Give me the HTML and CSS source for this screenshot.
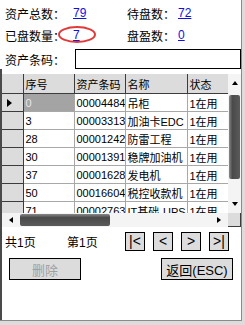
FILE: index.html
```html
<!DOCTYPE html>
<html lang="zh-CN">
<head>
  <meta charset="UTF-8" />
  <title>盘点</title>
  <link rel="stylesheet" href="styles.css">
</head>
<body>
  <div class="screen">

    <div class="top">
      <!-- 统计 -->
      <div class="stats">
        <span>资产总数：</span><a href="#" class="num">79</a>
        <span>待盘数：</span><a href="#" class="num">72</a>
        <span>已盘数量：</span><a href="#" class="num circled">7<i class="ring"></i></a>
        <span>盘盈数：</span><a href="#" class="num">0</a>
      </div>

      <!-- 条码 -->
      <div class="barcode">
        <span>资产条码：</span>
        <input type="text" class="barcode-input">
      </div>
    </div>

    <div class="bottom">
      <!-- 列表 -->
      <div class="grid">
        <div class="cells">
          <table>
            <colgroup>
              <col class="c-head"><col class="c-no"><col class="c-code"><col class="c-name"><col class="c-state">
            </colgroup>
            <thead>
              <tr><th></th><th>序号</th><th>资产条码</th><th>名称</th><th>状态</th></tr>
            </thead>
            <tbody>
              <tr><td class="rh"><span class="cursor"></span></td><td class="sel">0</td><td>00004484</td><td>吊柜</td><td>1在用</td></tr>
              <tr><td class="rh"></td><td>3</td><td>00003313</td><td>加油卡EDC</td><td>1在用</td></tr>
              <tr><td class="rh"></td><td>28</td><td>00001242</td><td>防雷工程</td><td>1在用</td></tr>
              <tr><td class="rh"></td><td>30</td><td>00001391</td><td>稳牌加油机</td><td>1在用</td></tr>
              <tr><td class="rh"></td><td>37</td><td>00001628</td><td>发电机</td><td>1在用</td></tr>
              <tr><td class="rh"></td><td>50</td><td>00016604</td><td>税控收款机</td><td>1在用</td></tr>
              <tr><td class="rh"></td><td>71</td><td>00002763</td><td>IT基础-UPS</td><td>1在用</td></tr>
            </tbody>
          </table>
        </div>
        <div class="vscroll">
          <div class="arrow-box"><span class="tri up"></span></div>
          <div class="vthumb"></div>
          <div class="vtrack"></div>
          <div class="arrow-box"><span class="tri down"></span></div>
        </div>
        <div class="hscroll">
          <div class="arrow-side"><span class="tri left"></span></div>
          <div class="hthumb"></div>
          <div class="htrack"></div>
          <div class="arrow-side"><span class="tri right"></span></div>
        </div>
        <div class="corner"></div>
      </div>

      <!-- 分页 -->
      <div class="pager">
        <span class="total">共1页</span>
        <span class="current">第1页</span>
        <div class="pager-btns">
          <button class="pg">|&lt;</button>
          <button class="pg">&lt;</button>
          <button class="pg">&gt;</button>
          <button class="pg">&gt;|</button>
        </div>
      </div>

      <div class="actions">
        <button class="btn" disabled>删除</button>
        <button class="btn">返回(ESC)</button>
      </div>
    </div>

  </div>
</body>
</html>
```

FILE: styles.css
```css
body {
  margin: 0;
  width: 245px;
  height: 325px;
  background-color: #dcdcdc;
  font-family: 'Liberation Sans', 'Noto Sans CJK SC', sans-serif;
  font-size: 12px;
  color: #000;
  overflow: hidden;
}

.screen {
  display: flex;
  flex-direction: column;
  width: 241px;
  height: 320px;
  background-color: #fff;
  border-right: 1px solid #8a8a8a;
  border-bottom: 1px solid #8a8a8a;
}

.top {
  padding-left: 2px;
}

.bottom {
  flex: 1;
  border-left: 2px solid #4a4a4a;
}

/* 统计 */
.stats {
  display: grid;
  grid-template-columns: 68px 54px 51px auto;
  grid-auto-rows: 22px;
  align-items: center;
  padding: 2px 0 0 3px;
}

.num {
  color: #1010e0;
  text-decoration: underline;
}

.circled {
  position: relative;
}

.ring {
  position: absolute;
  left: -15px;
  top: -2px;
  width: 34px;
  height: 13px;
  border: 2px solid #e03a3a;
  border-radius: 50%;
}

/* 条码 */
.barcode {
  display: flex;
  align-items: center;
  height: 20px;
  margin-top: 3px;
  padding-left: 3px;
}

.barcode span {
  width: 70px;
}

.barcode-input {
  margin: 0;
  padding: 0;
  border: 1px solid #000;
  box-sizing: border-box;
  height: 20px;
  width: 166px;
}

/* 列表 */
.grid {
  display: grid;
  grid-template-columns: 226px 13px;
  grid-template-rows: 139px 14px;
  margin-top: 5px;
}

.cells {
  overflow: hidden;
}

table {
  border-collapse: collapse;
  table-layout: fixed;
  width: 226px;
  font-size: 11px;
}

.c-head { width: 21px; }
.c-no { width: 51px; }
.c-code { width: 51px; }
.c-name { width: 62px; }
.c-state { width: 41px; }

th, td {
  padding: 0 0 0 2px;
  text-align: left;
  font-weight: normal;
  white-space: nowrap;
  overflow: hidden;
  text-overflow: clip;
}

th {
  height: 19px;
  background-color: #dcdcdc;
  border: 1px solid #3c3c3c;
  border-top: none;
}

td {
  height: 17px;
  border: 1px solid #a8a8a8;
}

td.rh {
  background-color: #dcdcdc;
  border-color: #3c3c3c;
  border-left: none;
}

th:first-child {
  border-left: none;
}

td.sel {
  background-color: #a4a4a4;
  color: #e8e8e8;
}

.cursor {
  display: block;
  width: 0;
  height: 0;
  margin-left: 3px;
  border-top: 4px solid transparent;
  border-bottom: 4px solid transparent;
  border-left: 5px solid #000;
}

/* 滚动条 */
.vscroll {
  display: flex;
  flex-direction: column;
  background-color: #f4f4f4;
}

.arrow-box {
  height: 18px;
  display: flex;
  align-items: center;
  justify-content: center;
}

.vthumb {
  height: 84px;
  margin: 3px 1px 0 1px;
  border-radius: 2px;
  background: linear-gradient(to right, #8a8a8a, #4a4a4a 30%, #5a5a5a);
}

.vtrack {
  flex: 1;
}

.hscroll {
  display: flex;
  align-items: center;
  background-color: #f4f4f4;
}

.arrow-side {
  width: 18px;
  display: flex;
  justify-content: center;
}

.hthumb {
  width: 90px;
  height: 12px;
  border-radius: 2px;
  background: linear-gradient(to bottom, #8a8a8a, #4a4a4a 30%, #5a5a5a);
}

.htrack {
  flex: 1;
}

.corner {
  background-color: #dcdcdc;
  border-right: 1px solid #3c3c3c;
  border-bottom: 1px solid #3c3c3c;
}

.tri {
  width: 0;
  height: 0;
}

.tri.up {
  border-left: 3px solid transparent;
  border-right: 3px solid transparent;
  border-bottom: 4px solid #000;
}

.tri.down {
  border-left: 3px solid transparent;
  border-right: 3px solid transparent;
  border-top: 4px solid #000;
}

.tri.left {
  border-top: 3px solid transparent;
  border-bottom: 3px solid transparent;
  border-right: 4px solid #000;
}

.tri.right {
  border-top: 3px solid transparent;
  border-bottom: 3px solid transparent;
  border-left: 4px solid #000;
}

/* 分页 */
.pager {
  display: flex;
  align-items: center;
  height: 19px;
  margin-top: 5px;
  padding-left: 3px;
}

.total {
  width: 62px;
}

.current {
  width: 58px;
}

.pager-btns {
  display: flex;
  gap: 8px;
}

.pg {
  width: 20px;
  height: 19px;
  padding: 0;
  background-color: #dcdcdc;
  border: 1px solid #000;
  font-family: 'Liberation Sans', sans-serif;
  font-size: 14px;
  line-height: 17px;
  color: #000;
}

/* 按钮 */
.actions {
  display: flex;
  justify-content: space-between;
  margin-top: 7px;
  padding: 0 8px 0 7px;
}

.btn {
  width: 72px;
  height: 22px;
  padding: 0;
  background-color: #dcdcdc;
  border: 1px solid #000;
  font-family: 'Liberation Sans', 'Noto Sans CJK SC', sans-serif;
  font-size: 13px;
  color: #000;
}

.btn:disabled {
  color: #a0a0a0;
}
```
